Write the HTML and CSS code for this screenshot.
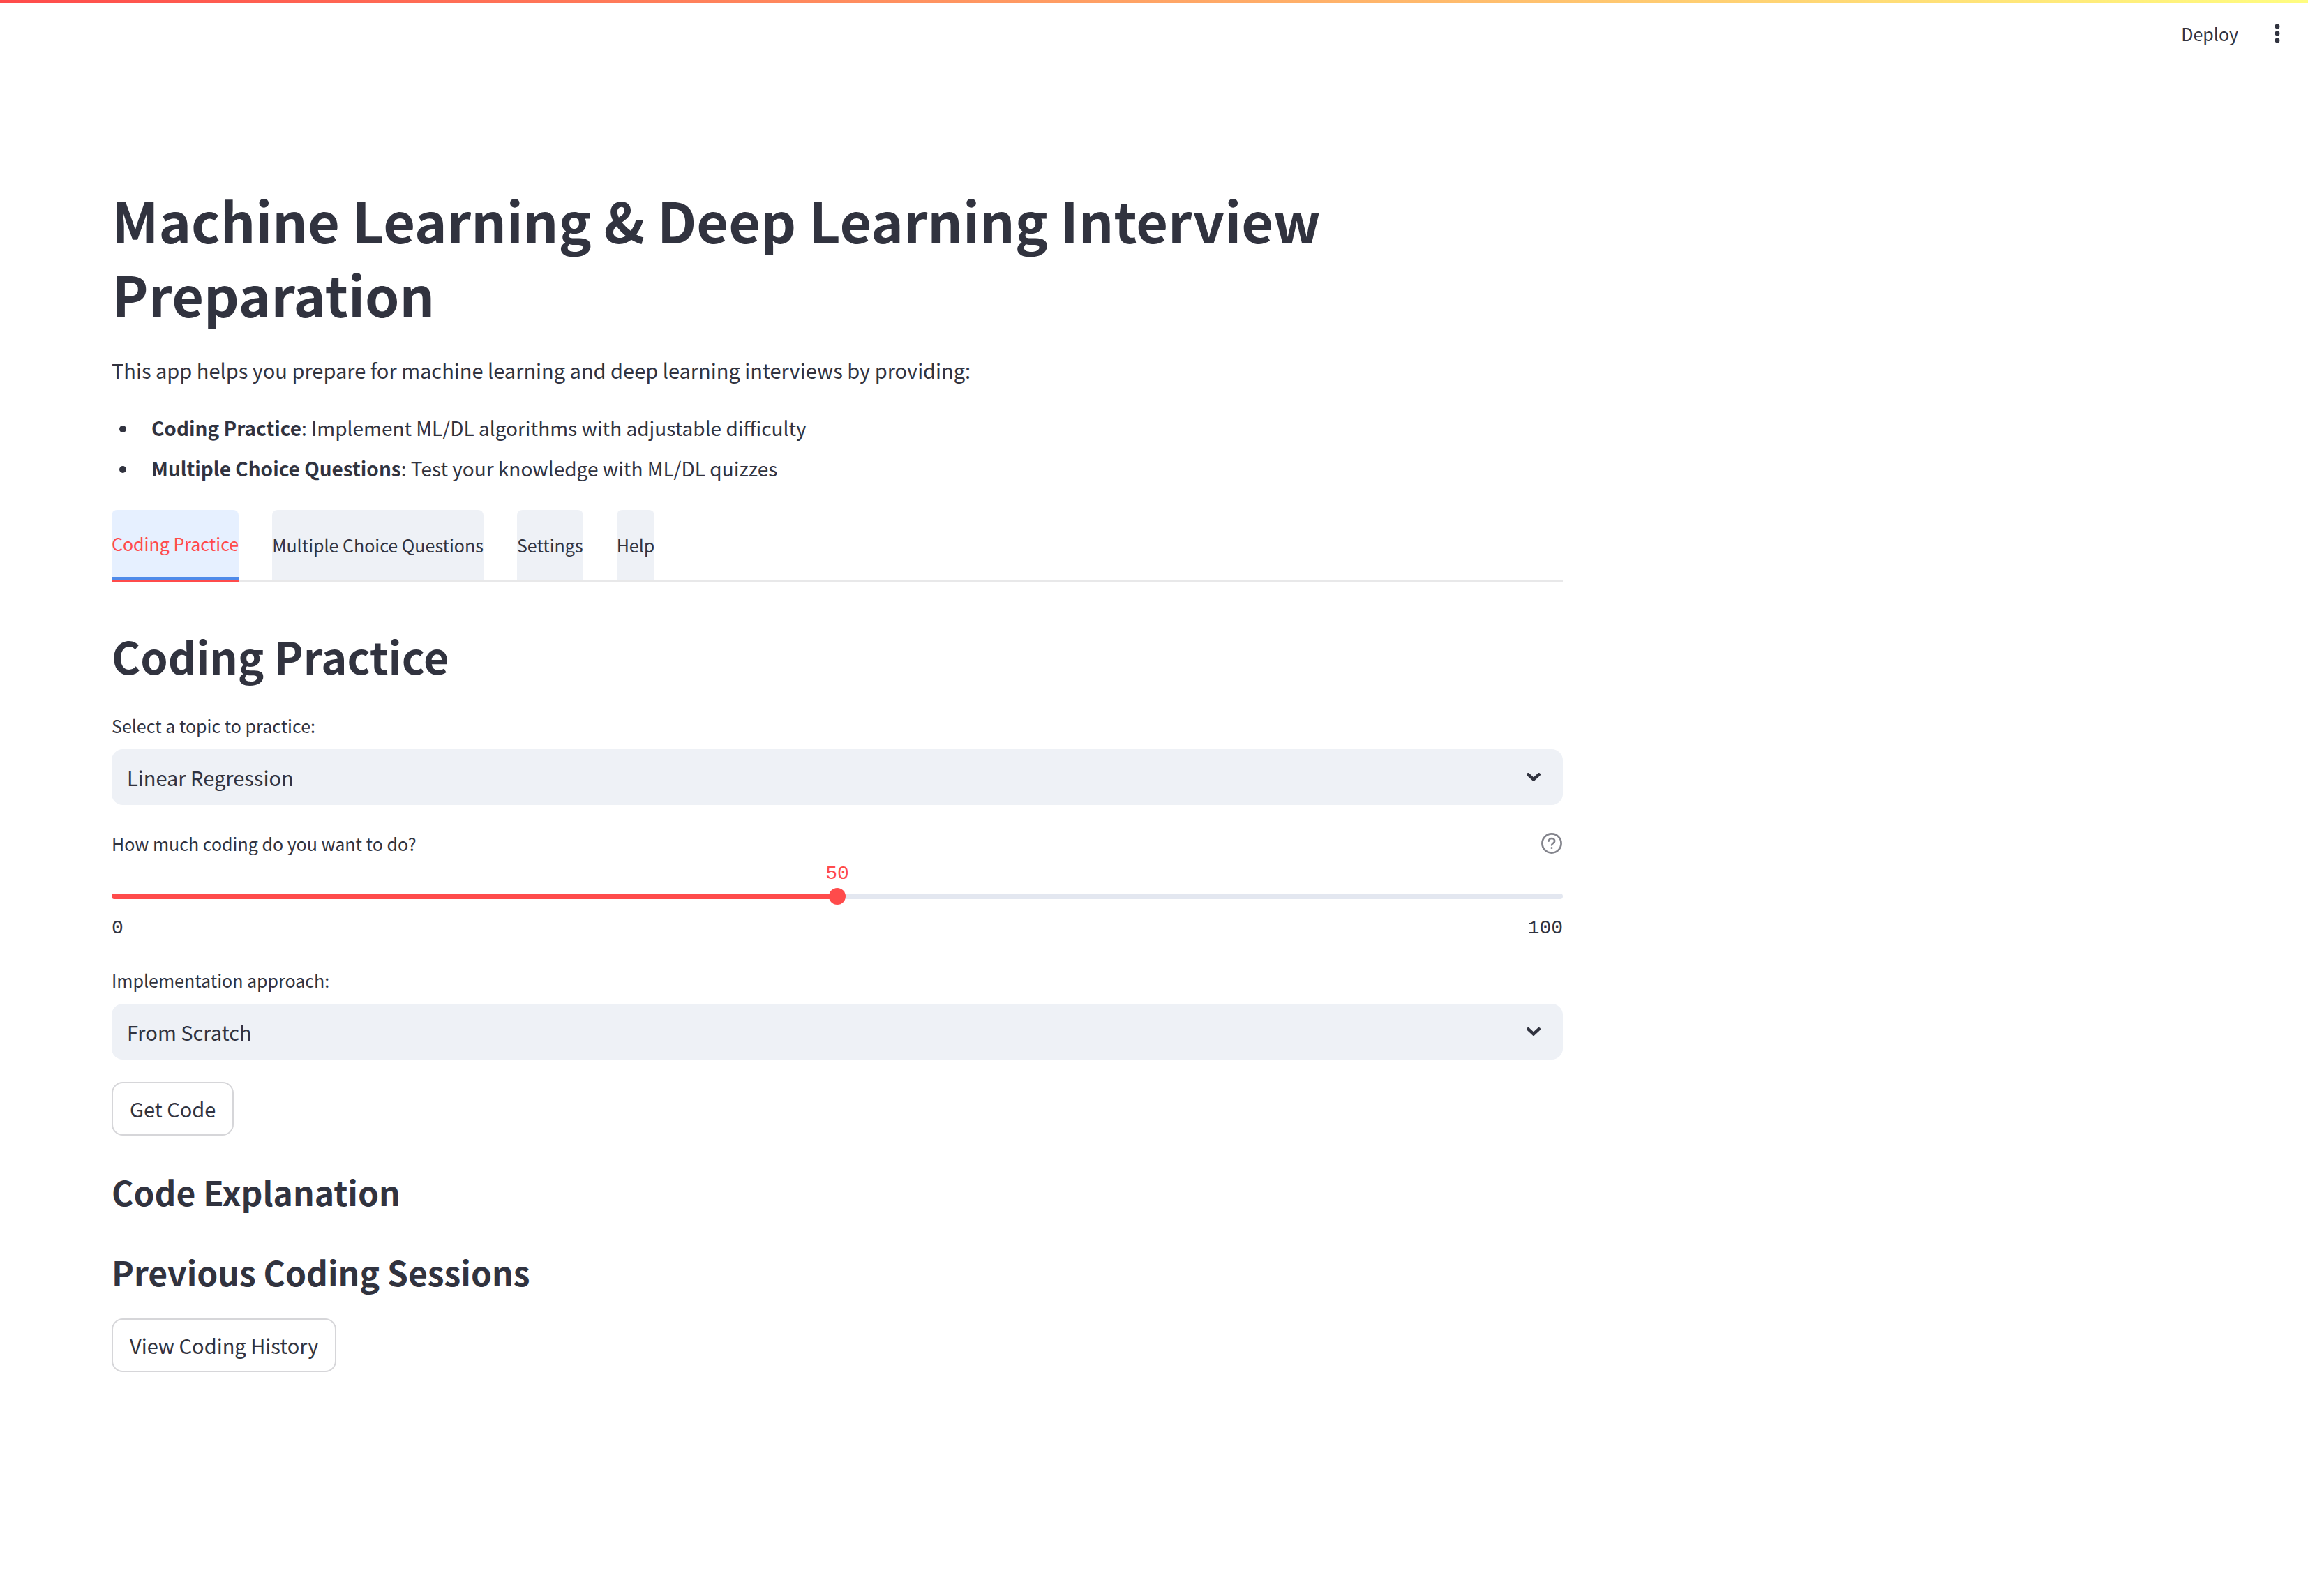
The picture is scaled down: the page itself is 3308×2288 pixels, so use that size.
FILE: index.html
```html
<!DOCTYPE html>
<html lang="en">
<head>
<meta charset="utf-8">
<meta name="viewport" content="width=device-width, initial-scale=1">
<title>Machine Learning &amp; Deep Learning Interview Preparation</title>
<link rel="stylesheet" href="styles.css">
</head>
<body>
<header class="toolbar">
  <button type="button" class="toolbar-button">Deploy</button>
  <button type="button" class="toolbar-button" aria-label="Main menu">
    <svg class="menu-icon" viewBox="0 0 32 32" aria-hidden="true"><circle cx="16" cy="6" r="3.4"/><circle cx="16" cy="16" r="3.4"/><circle cx="16" cy="26" r="3.4"/></svg>
  </button>
</header>

<main class="page">
  <h1 class="title">Machine Learning &amp; Deep Learning Interview Preparation</h1>
  <p class="intro">This app helps you prepare for machine learning and deep learning interviews by providing:</p>
  <ul class="features">
    <li><strong>Coding Practice</strong>: Implement ML/DL algorithms with adjustable difficulty</li>
    <li><strong>Multiple Choice Questions</strong>: Test your knowledge with ML/DL quizzes</li>
  </ul>

  <div class="tabs" role="tablist">
    <button type="button" class="tab tab-active" role="tab" aria-selected="true">Coding Practice</button>
    <button type="button" class="tab" role="tab" aria-selected="false">Multiple Choice Questions</button>
    <button type="button" class="tab" role="tab" aria-selected="false">Settings</button>
    <button type="button" class="tab" role="tab" aria-selected="false">Help</button>
  </div>

  <section class="panel" role="tabpanel">
    <h2 class="heading">Coding Practice</h2>

    <div class="field">
      <label class="label" for="topic">Select a topic to practice:</label>
      <div class="select-box">
        <select id="topic" class="select"><option>Linear Regression</option></select>
        <svg class="chevron" viewBox="0 0 20 12" aria-hidden="true"><path d="M2.4 2.4 10 9.4l7.6-7"/></svg>
      </div>
    </div>

    <div class="slider-field">
      <div class="label-row">
        <label class="label" for="amount">How much coding do you want to do?</label>
        <svg class="help-icon" viewBox="0 0 32 32" role="img" aria-label="Help"><circle cx="16" cy="16" r="13.6"/><path d="M11.8 12.6c.4-2.3 2-3.6 4.2-3.6 2.4 0 4.2 1.5 4.2 3.8 0 3-3.9 3.2-4.2 5.6"/><circle class="dot" cx="16" cy="22.6" r="1.5"/></svg>
      </div>
      <div class="value-row"><output class="value" for="amount" style="left: 50%">50</output></div>
      <input id="amount" class="slider" type="range" min="0" max="100" value="50">
      <div class="ticks"><span>0</span><span>100</span></div>
    </div>

    <div class="field">
      <label class="label" for="approach">Implementation approach:</label>
      <div class="select-box">
        <select id="approach" class="select"><option>From Scratch</option></select>
        <svg class="chevron" viewBox="0 0 20 12" aria-hidden="true"><path d="M2.4 2.4 10 9.4l7.6-7"/></svg>
      </div>
    </div>

    <button type="button" class="button">Get Code</button>
    <h3 class="subheading">Code Explanation</h3>
    <h3 class="subheading">Previous Coding Sessions</h3>
    <button type="button" class="button">View Coding History</button>
  </section>
</main>
</body>
</html>
```

FILE: styles.css
```css
:root {
  --text: #31333f;
  --primary: #ff4b4b;
  --surface: #eef1f6;
  --track: #e3e7f0;
  --border: #d6d6d9;
}

* {
  box-sizing: border-box;
}

body {
  margin: 0;
  background: #fff;
  color: var(--text);
  font-family: "Noto Sans CJK SC", "Noto Sans", sans-serif;
  font-size: 29px;
  line-height: 51px;
}

button,
select {
  font-family: inherit;
  color: inherit;
  cursor: pointer;
}

.toolbar {
  display: flex;
  justify-content: flex-end;
  align-items: center;
  gap: 40px;
  height: 100px;
  padding: 0 28px 4px;
  background: linear-gradient(90deg, #ff4b4b, #fffd80) top / 100% 4px no-repeat;
}

.toolbar-button {
  display: flex;
  padding: 0;
  border: 0;
  background: none;
  font-size: 25px;
  line-height: 44px;
}

.menu-icon {
  width: 32px;
  height: 32px;
  fill: currentColor;
}

.page {
  max-width: 2400px;
  padding: 162px 160px 320px;
}

.title {
  margin: 0 0 31px;
  font-size: 79px;
  line-height: 106px;
  font-weight: 700;
}

.intro {
  margin: 0 0 32px;
}

.features {
  display: flex;
  flex-direction: column;
  gap: 7px;
  margin: 0 0 34px;
  padding-left: 57px;
  list-style: none;
  font-size: 28px;
}

.features li::before {
  content: "";
  display: inline-block;
  width: 10px;
  height: 10px;
  margin: 0 36px 0 -46px;
  border-radius: 50%;
  background: currentColor;
  vertical-align: 5px;
}

.tabs {
  display: flex;
  gap: 48px;
  border-bottom: 4px solid #e8e8e9;
}

.tab {
  height: 100px;
  padding: 0;
  border: 0;
  border-radius: 8px 8px 0 0;
  background: var(--surface);
  font-size: 25px;
  line-height: 44px;
}

.tab-active {
  height: 104px;
  margin-bottom: -4px;
  padding-bottom: 8px;
  background:
    linear-gradient(var(--primary), var(--primary)) bottom / 100% 4px no-repeat,
    linear-gradient(#4f8bea, #4f8bea) bottom / 100% 8px no-repeat,
    #e6f0ff;
  color: var(--primary);
}

.panel {
  display: flex;
  flex-direction: column;
  align-items: stretch;
  gap: 32px;
  padding-top: 61px;
}

.heading {
  margin: 0;
  padding-bottom: 2px;
  font-size: 63px;
  line-height: 88px;
  font-weight: 600;
}

.field {
  display: flex;
  flex-direction: column;
  gap: 12px;
}

.label {
  font-size: 25px;
  line-height: 44px;
}

.select-box {
  display: grid;
  align-items: center;
}

.select {
  grid-area: 1 / 1;
  width: 100%;
  height: 80px;
  padding: 0 64px 0 22px;
  border: 0;
  border-radius: 16px;
  appearance: none;
  background: var(--surface);
  font-size: 29px;
  line-height: 51px;
}

.chevron {
  grid-area: 1 / 1;
  justify-self: end;
  width: 20px;
  height: 12px;
  margin-right: 32px;
  fill: none;
  stroke: currentColor;
  stroke-width: 4.6;
  stroke-linecap: round;
  pointer-events: none;
}

.slider-field {
  display: flex;
  flex-direction: column;
  padding-top: 1px;
}

.label-row {
  display: flex;
  justify-content: space-between;
  align-items: center;
}

.help-icon {
  width: 32px;
  height: 32px;
  fill: none;
  stroke: #83848c;
  stroke-width: 2.7;
  stroke-linecap: round;
}

.help-icon .dot {
  fill: #83848c;
  stroke: none;
}

.value-row,
.ticks {
  font-family: "Liberation Mono", monospace;
  font-size: 28px;
  line-height: 40px;
}

.value-row {
  position: relative;
  height: 42px;
}

.value {
  position: absolute;
  bottom: 0;
  transform: translateX(-50%);
  color: var(--primary);
}

.slider {
  width: 100%;
  height: 24px;
  margin: 0;
  appearance: none;
  background: none;
}

.slider::-webkit-slider-runnable-track {
  height: 8px;
  border-radius: 4px;
  background: linear-gradient(90deg, var(--primary) 50%, var(--track) 50%);
}

.slider::-webkit-slider-thumb {
  width: 24px;
  height: 24px;
  margin-top: -8px;
  border-radius: 50%;
  appearance: none;
  background: var(--primary);
}

.ticks {
  display: flex;
  justify-content: space-between;
  padding-top: 14px;
}

.button {
  align-self: flex-start;
  height: 77px;
  padding: 0 24px;
  border: 2px solid var(--border);
  border-radius: 16px;
  background: #fff;
  font-size: 29px;
  line-height: 51px;
}

.subheading {
  margin: 0;
  padding-top: 13px;
  font-size: 48px;
  line-height: 70px;
  font-weight: 600;
}
```
